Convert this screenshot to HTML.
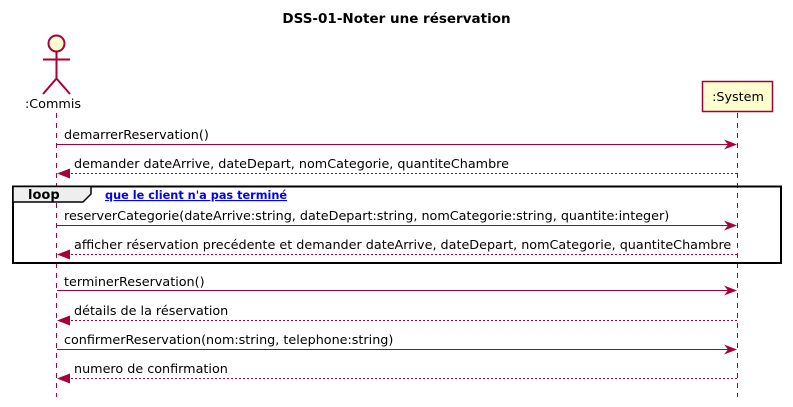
<!DOCTYPE html>
<html><head><meta charset="utf-8"><style>
html,body{margin:0;padding:0;background:#fff;}
svg{display:block;}
text{font-family:"DejaVu Sans","Liberation Sans",sans-serif;font-size:12.75px;fill:#000;}
</style></head><body>
<svg width="793" height="407" viewBox="0 0 793 407" xmlns="http://www.w3.org/2000/svg">
<text x="396.5" y="23" text-anchor="middle" style="font-weight:bold;font-size:13.5px">DSS-01-Noter une réservation</text>
<line x1="56.5" y1="113" x2="56.5" y2="397" stroke="#A80036" stroke-dasharray="5,5"/>
<line x1="737.5" y1="113" x2="737.5" y2="397" stroke="#A80036" stroke-dasharray="5,5"/>
<circle cx="56.5" cy="43.5" r="8" fill="#FEFECE" stroke="#A80036" stroke-width="2"/>
<path d="M56.5 51.5V78.5M43 59.5H70M43 94L56.5 78.5L70 94" stroke="#A80036" stroke-width="2" fill="none"/>
<text x="53" y="108" text-anchor="middle">:Commis</text>
<rect x="702.5" y="81.5" width="70" height="30" fill="#FEFECE" stroke="#A80036" stroke-width="1.5"/>
<text x="738" y="101" text-anchor="middle">:System</text>
<rect x="13" y="186.5" width="768" height="76.5" fill="none" stroke="#000" stroke-width="2"/>
<path d="M13 186.5H91V194L83 202H13Z" fill="#EEEEEE" stroke="#000" stroke-width="1.5"/>
<text x="28" y="199" style="font-weight:bold;font-size:13px">loop</text>
<text x="105" y="199" style="font-weight:bold;font-size:11.3px;fill:#0000FF;text-decoration:underline">que le client n'a pas terminé</text>
<g stroke="#A80036" fill="none">
<line x1="57" y1="144.5" x2="735" y2="144.5"/>
<line x1="59" y1="173.5" x2="737" y2="173.5" stroke-dasharray="2,2"/>
<line x1="57" y1="225.5" x2="735" y2="225.5"/>
<line x1="59" y1="254.5" x2="737" y2="254.5" stroke-dasharray="2,2"/>
<line x1="57" y1="290.5" x2="735" y2="290.5"/>
<line x1="59" y1="320.5" x2="737" y2="320.5" stroke-dasharray="2,2"/>
<line x1="57" y1="349.5" x2="735" y2="349.5"/>
<line x1="59" y1="378.5" x2="737" y2="378.5" stroke-dasharray="2,2"/>
</g>
<g fill="#A80036">
<path d="M724 139.5L737 144.5L724 149.5L728 144.5Z"/>
<path d="M70 168.5L57 173.5L70 178.5Z"/>
<path d="M724 220.5L737 225.5L724 230.5L728 225.5Z"/>
<path d="M70 249.5L57 254.5L70 259.5Z"/>
<path d="M724 285.5L737 290.5L724 295.5L728 290.5Z"/>
<path d="M70 315.5L57 320.5L70 325.5Z"/>
<path d="M724 344.5L737 349.5L724 354.5L728 349.5Z"/>
<path d="M70 373.5L57 378.5L70 383.5Z"/>
</g>
<text x="64" y="139">demarrerReservation()</text>
<text x="74" y="168">demander dateArrive, dateDepart, nomCategorie, quantiteChambre</text>
<text x="64" y="220">reserverCategorie(dateArrive:string, dateDepart:string, nomCategorie:string, quantite:integer)</text>
<text x="74" y="249">afficher réservation precédente et demander dateArrive, dateDepart, nomCategorie, quantiteChambre</text>
<text x="64" y="286">terminerReservation()</text>
<text x="74" y="315">détails de la réservation</text>
<text x="64" y="344">confirmerReservation(nom:string, telephone:string)</text>
<text x="74" y="373">numero de confirmation</text>
</svg>
</body></html>
